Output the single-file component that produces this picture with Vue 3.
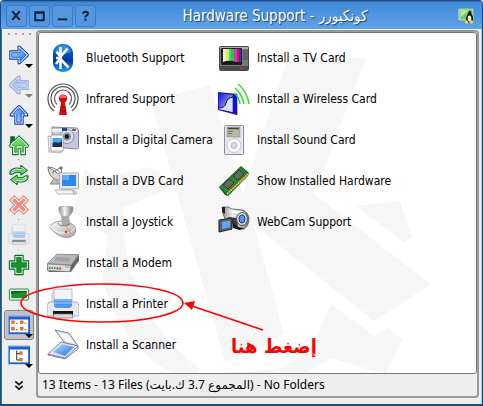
<template>
    <div class="window">
        <!-- icon definitions -->
        <svg class="defs" aria-hidden="true">
            <defs>
                <linearGradient id="gBlue" x1="0" y1="0" x2="1" y2="1">
                    <stop offset="0" stop-color="#b5e0ff" />
                    <stop offset="1" stop-color="#1c6fe8" />
                </linearGradient>
                <linearGradient id="gBt" x1="0" y1="0" x2="0" y2="1">
                    <stop offset="0" stop-color="#0a78dc" />
                    <stop offset="0.6" stop-color="#0634a4" />
                    <stop offset="1" stop-color="#1aa4f4" />
                </linearGradient>
                <linearGradient id="gGreen" x1="0" y1="0" x2="0" y2="1">
                    <stop offset="0" stop-color="#8cf070" />
                    <stop offset="1" stop-color="#2fae2f" />
                </linearGradient>
                <linearGradient id="gGrey" x1="0" y1="0" x2="1" y2="1">
                    <stop offset="0" stop-color="#ffffff" />
                    <stop offset="1" stop-color="#a2a2aa" />
                </linearGradient>
                <linearGradient id="gMetal" x1="0" y1="0" x2="1" y2="0">
                    <stop offset="0" stop-color="#8a8a8a" />
                    <stop offset="0.4" stop-color="#f4f4f4" />
                    <stop offset="1" stop-color="#777777" />
                </linearGradient>
                <linearGradient id="gWave" x1="0" y1="0" x2="1" y2="1">
                    <stop offset="0" stop-color="#1010e0" />
                    <stop offset="1" stop-color="#d8dcff" />
                </linearGradient>
            </defs>

            <!-- toolbar, 24x24 -->
            <symbol id="arrow" viewBox="0 0 24 24">
                <path d="M2 7.500h9V2.500h2l9 8.500v2L13 21.500h-2v-5H2z" fill="#fff" stroke="#123fc0" stroke-width="1.200" stroke-linejoin="round" />
                <path d="M4 9.500h9V5l7 7-7 7v-4.500H4z" fill="url(#gBlue)" stroke="#1450c8" stroke-width="0.900" />
            </symbol>
            <symbol id="home" viewBox="0 0 24 24">
                <path d="M3 3h4v4l5-5 10.500 10.500-1 2H19v8h-5v-7h-3v7H5v-8H2.500l-1-2L3 11z" fill="#fff" stroke="#0b7a2a" stroke-width="1.200" stroke-linejoin="round" />
                <path d="M3 3h4v4L3 11z" fill="#0a6a28" />
                <path d="M12 4.500l8 8h-3V20h-1.500v-7h-6v7H7v-7.500H4z" fill="url(#gGreen)" stroke="#22a028" stroke-width="0.600" />
            </symbol>
            <symbol id="reload" viewBox="0 0 24 24">
                <path d="M2 11c0-5 5-8 12-6V1.500l7 5.500-7 5V9.500c-5-1.500-7-.5-9 1.500z" fill="#fff" stroke="#0b6a28" stroke-width="1.200" stroke-linejoin="round" />
                <path d="M3.500 9.500C5 6 9 5.500 15 7V4.500L19 7l-4 3V8.500C9 7 6 7.500 3.500 9.500z" fill="#5edc50" stroke="#2fae2f" stroke-width="0.500" />
                <path d="M22 13c0 5-5 8-12 6v3.500L3 17l7-5v2.500c5 1.500 7 .5 9-1.500z" fill="#fff" stroke="#0b6a28" stroke-width="1.200" stroke-linejoin="round" />
                <path d="M20.500 14.500C19 18 15 18.500 9 17v2.500L5 17l4-3v1.500c6 1.500 9 1 11.500-1z" fill="#5edc50" stroke="#2fae2f" stroke-width="0.500" />
            </symbol>
            <symbol id="stop" viewBox="0 0 24 24">
                <path d="M7 2l5 5 5-5 5 5-5 5 5 5-5 5-5-5-5 5-5-5 5-5-5-5z" fill="#fff" stroke="#f07c7c" stroke-width="1.300" stroke-linejoin="round" />
                <path d="M7 5l5 5 5-5 2 2-5 5 5 5-2 2-5-5-5 5-2-2 5-5-5-5z" fill="#f08a84" stroke="#ee8a86" />
            </symbol>
            <symbol id="zoomin" viewBox="0 0 24 24">
                <path d="M7.500 1.500h9v6h6v9h-6v6h-9v-6h-6v-9h6z" fill="#fff" stroke="#0b6a28" stroke-width="1.200" stroke-linejoin="round" />
                <path d="M9.500 3.500h5v6h6v5h-6v6h-5v-6h-6v-5h6z" fill="#16962a" stroke="#0a7020" stroke-width="0.800" />
            </symbol>
            <symbol id="zoomout" viewBox="0 0 24 24">
                <rect x="1.500" y="5.500" width="21" height="12" rx="1" fill="#fff" stroke="#187a38" />
                <rect x="3.500" y="7.500" width="17" height="8" fill="#16962a" />
                <path d="M3.500 11q9-1 17-2.500v-1h-17z" fill="#0a6d1c" />
            </symbol>
            <symbol id="iconview" viewBox="0 0 24 24">
                <rect x="0" y="2" width="24" height="20" fill="#1c5fd0" />
                <path d="M.5 22V2.500h23" fill="none" stroke="#70b0f8" />
                <rect x="2" y="6" width="20" height="14" fill="#fff" />
                <g fill="#f07818" stroke="#b84808" stroke-width="0.500">
                    <rect x="4" y="7.500" width="3" height="3" /><rect x="13.500" y="7.500" width="3" height="3" />
                    <rect x="4" y="14.500" width="3" height="3" /><rect x="13.500" y="14.500" width="3" height="3" />
                </g>
                <path d="M8.500 10h2M18 10h2M8.500 17h2M18 17h2" stroke="#555" />
            </symbol>
            <symbol id="treeview" viewBox="0 0 24 24">
                <rect x="0" y="2" width="24" height="20" fill="#1c5fd0" />
                <path d="M.5 22V2.500h23" fill="none" stroke="#70b0f8" />
                <rect x="2" y="6" width="20" height="14" fill="#fff" />
                <path d="M9.500 7v10.500H13M9.500 10.500H13" fill="none" stroke="#222" />
                <rect x="12.500" y="8.500" width="3" height="3" fill="#f07818" stroke="#c05008" stroke-width="0.500" />
                <rect x="12.500" y="15.500" width="3" height="3" fill="#f07818" stroke="#c05008" stroke-width="0.500" />
            </symbol>
            <symbol id="more" viewBox="0 0 24 24">
                <path d="M8 8l4 3.500L16 8M8 13l4 3.500 4-3.500" fill="none" stroke="#111" stroke-width="1.800" />
            </symbol>

            <!-- devices, 32x32 -->
            <symbol id="bluetooth" viewBox="0 0 32 32">
                <rect x="6" y="2" width="20" height="28" rx="9" fill="url(#gBt)" />
                <path d="M8 10Q9 3 16 3t8 7q-8 4-16 0z" fill="#58b4f8" opacity="0.500" />
                <path d="M13.500 5v22M9.500 9.500l4 5.500M9 22l4.500-6M20.500 6.500l-8 9.500 9 9.500M9 16h4" fill="none" stroke="#fff" stroke-width="2.600" />
            </symbol>
            <symbol id="infrared" viewBox="0 0 32 32">
                <g fill="none" stroke="#555" stroke-width="1.200">
                    <path d="M7 28A15 15 0 1 1 25 28" />
                    <path d="M8 24.500A12 12 0 1 1 24 24.500" />
                    <path d="M10 21.500A8.500 8.500 0 1 1 22 21.500" />
                </g>
                <path d="M14.500 17h3L20 32h-8z" fill="#d01010" />
                <circle cx="16" cy="15.500" r="4" fill="#d80808" />
                <path d="M13 15a3 3 0 0 1 6 0z" fill="#ff7060" />
                <path d="M13.500 24h5M13 28h6" stroke="#900" />
            </symbol>
            <symbol id="camera" viewBox="0 0 32 32">
                <path d="M5 3l25 1q2 1 1.500 3v16q0 2-2 2l-24-2z" fill="#c6c6de" stroke="#8585a0" />
                <path d="M5 5h25v3H5z" fill="#eeeef8" />
                <circle cx="20" cy="12.500" r="7" fill="#dcdce8" stroke="#8c8ca4" />
                <circle cx="20" cy="12.500" r="4" fill="#8e92a8" />
                <circle cx="20" cy="12.500" r="2.200" fill="#16161e" />
                <path d="M15 4h5v3h-5z" fill="#26487c" />
                <rect x="25" y="5" width="4" height="2" fill="#666" />
                <path d="M1 12l14 3-1 14-12-1z" fill="#eee" stroke="#999" stroke-width="0.700" />
                <path d="M4 11h12v16H4z" fill="#fff" stroke="#888" stroke-width="0.700" />
                <path d="M5.500 14H15v9H5.500z" fill="#48a4ec" />
                <path d="M5.500 19l3-1 3 1 3.500-2v6H5.500z" fill="#173252" />
            </symbol>
            <symbol id="dvb" viewBox="0 0 32 32">
                <path d="M1 2q0 10 9 13 6 1 8-2z" fill="#d8d8d8" stroke="#777" />
                <path d="M1 2q9 0 17 11M5 8l9-6 1 10" fill="none" stroke="#777" />
                <circle cx="14" cy="3" r="1.500" fill="#666" />
                <path d="M7 14l-4 5h9l-2-4" fill="#bbb" stroke="#888" />
                <rect x="12.500" y="8" width="19" height="16" rx="1" fill="#e8eaf0" stroke="#a6aab8" />
                <rect x="15" y="10" width="14" height="11" fill="#2f86ee" />
                <path d="M15 10h7v5h-7z" fill="#82c2ff" opacity="0.600" />
                <path d="M19 24h7l2 3H17z" fill="#c4c4cc" />
                <path d="M8 25h17l3 4H11z" fill="#f5f5f8" stroke="#999" stroke-width="0.700" />
                <ellipse cx="28" cy="28" rx="2" ry="1.500" fill="#ddd" stroke="#999" stroke-width="0.600" />
            </symbol>
            <symbol id="joystick" viewBox="0 0 32 32">
                <path d="M3 21q2-5 11-6 11 1 14 6 2 4-1 8-5 4-11 2-9-3-13-10z" fill="url(#gGrey)" stroke="#999" />
                <path d="M3 20q6 8 16 7 6-1 9-5" fill="none" stroke="#fff" />
                <path d="M14 8h8l1 11q-5 3-8 0z" fill="#aaa" />
                <path d="M12 1q6-2 14 0 1 5-4 9-5 2-8-1-3-4-2-8z" fill="url(#gMetal)" stroke="#999" stroke-width="0.600" />
                <path d="M11 17q2 5 12 1" fill="none" stroke="#888" />
                <circle cx="19" cy="26" r="1.300" fill="#e83c18" /><circle cx="22.500" cy="25" r="1.300" fill="#f49a10" />
                <circle cx="20" cy="22.500" r="1" fill="#f4b030" />
            </symbol>
            <symbol id="modem" viewBox="0 0 32 32">
                <path d="M0 17L10 7l22 0.500v6L24 25H2l-2-2z" fill="#666" />
                <path d="M.5 16.500L10 7l21.500 1-7.500 10z" fill="#b9b9bd" stroke="#888" stroke-width="0.600" />
                <path d="M9 10l15 1-2 4-14-1z" fill="#a2a2a6" />
                <path d="M.5 17l23 1.500-.5 6L1 23.500z" fill="#dcdcdc" stroke="#888" stroke-width="0.600" />
                <path d="M2 21h8" stroke="#28a058" stroke-width="2" stroke-dasharray="1.500 1" />
                <path d="M10 21.500h5" stroke="#c02838" stroke-width="2" stroke-dasharray="1.500 1" />
                <path d="M18 20h4" stroke="#dd7777" />
            </symbol>
            <symbol id="printer" viewBox="0 0 32 32">
                <path d="M5 15V5l3-1v10z" fill="#e4e4ea" stroke="#aaa" stroke-width="0.600" />
                <path d="M7 1h18v15H7z" fill="#f4f4f8" stroke="#b0b0b8" stroke-width="0.800" />
                <path d="M2 14h28l2 3v10q0 1-1 1H1q-1 0-1-1V17z" fill="#e9e9ef" stroke="#9d9da8" stroke-width="0.800" />
                <path d="M7 11h18v7q-1 2-3 2H10q-3 0-3-3z" fill="#4f98ea" />
                <path d="M7 12h18M7 15h18" stroke="#9ed0ff" />
                <path d="M6 23h20v4H6z" fill="#111" />
                <path d="M7 26h18l1 4H6z" fill="#d9d9e0" stroke="#777" stroke-width="0.700" />
            </symbol>
            <symbol id="scanner" viewBox="0 0 32 32">
                <path d="M8 1l14 3 9 13-13-3z" fill="#dedee8" stroke="#84849a" />
                <path d="M10 3l11 3 7 9-10-3z" fill="#f6f6fb" />
                <path d="M1 25l13-12 17 4v3L18 30l-17-4z" fill="#e6e6f0" stroke="#84849a" />
                <path d="M6 23l9-8 12 3-9 9z" fill="url(#gBlue)" />
                <path d="M1 25l17 4 13-12" fill="none" stroke="#70708a" stroke-width="0.800" />
            </symbol>
            <symbol id="tv" viewBox="0 0 32 32">
                <rect x="1.500" y="4.500" width="29" height="24" rx="1" fill="#777" stroke="#4a4a4a" />
                <path d="M2 5h28v2H2z" fill="#b0b0b0" />
                <rect x="3" y="6" width="21" height="17" rx="1" fill="#222" />
                <rect x="5" y="7" width="3" height="13" fill="#e8e8f4" /><rect x="8" y="7" width="3" height="13" fill="#f4ec18" />
                <rect x="11" y="7" width="2" height="13" fill="#18d8e8" /><rect x="13" y="7" width="3" height="13" fill="#24cc28" />
                <rect x="16" y="7" width="3" height="13" fill="#ec28d4" /><rect x="19" y="7" width="2" height="13" fill="#e81818" />
                <rect x="21" y="7" width="2" height="13" fill="#2038dc" />
                <path d="M5 20q5-2 9-1l4 1 4 2H6z" fill="#111" />
                <path d="M25 9h5M25 11h5M25 13h5M25 15h5M25 17h5" stroke="#505050" />
                <path d="M2 24h28v4H2z" fill="#4c4c4c" />
                <path d="M22 26h3" stroke="#d03030" stroke-width="1.500" />
            </symbol>
            <symbol id="wireless" viewBox="0 0 32 32">
                <path d="M0 9l19 2v21L0 27z" fill="#1414b0" />
                <path d="M1 10l14 2v17L1 26z" fill="url(#gWave)" />
                <path d="M1 25q6 0 7-5t7-6v15L1 26z" fill="#dfe2ff" />
                <path d="M1 25q6 0 7-5t7-6" fill="none" stroke="#111" />
                <path d="M15 12l4-1v21l-4-3z" fill="#1010e8" stroke="#080880" stroke-width="0.600" />
                <path d="M20 1q9 7 11 20M17 5q7 6 9 16M16 10q5 4 6 11" fill="none" stroke="#20e020" stroke-width="1.500" />
            </symbol>
            <symbol id="sound" viewBox="0 0 32 32">
                <rect x="6.500" y="1.500" width="19" height="29" rx="1" fill="#e8e8f2" stroke="#8e8ea0" />
                <rect x="9" y="3" width="13" height="10" fill="#b8b89c" stroke="#777" stroke-width="0.500" />
                <path d="M10 4.500h11" stroke="#444" stroke-width="1.500" />
                <path d="M10 7.500h5M10 9.500h4" stroke="#666" stroke-width="0.800" />
                <circle cx="16" cy="21.500" r="7" fill="#fafaff" stroke="#c4c4d0" />
                <circle cx="16" cy="21.500" r="3" fill="#dcdce8" stroke="#b4b4c4" />
            </symbol>
            <symbol id="ram" viewBox="0 0 32 32">
                <path d="M1 22L23 1l8 7-1 3L10 31l-3-1z" fill="#0c5a20" />
                <path d="M2 22L23 2l6 6L8 28z" fill="#238838" />
                <path d="M9 29L30 9" stroke="#f0cc30" stroke-width="2" stroke-dasharray="2 0.500" />
                <path d="M5 20l6-6 5 4-6 6z" fill="#666" stroke="#222" stroke-width="0.700" />
                <path d="M15 11l6-6 5 4-6 6z" fill="#666" stroke="#222" stroke-width="0.700" />
            </symbol>
            <symbol id="webcam" viewBox="0 0 32 32">
                <path d="M4 1h6l4 2 11 1q5 2 6 8 0 8-5 11h-6L9 17 5 8z" fill="url(#gMetal)" stroke="#444" stroke-width="0.700" />
                <path d="M4 1h3v7L4 6z" fill="#222" />
                <path d="M8 5q7 0 10 3l10-1-5-2H11z" fill="#fff" />
                <path d="M10 11l9 1 1 10-8-5z" fill="#3a3a3a" />
                <ellipse cx="24" cy="13" rx="5.500" ry="6.500" fill="#d4d4d4" stroke="#555" />
                <ellipse cx="24" cy="13" rx="3" ry="4" fill="#5a98e4" stroke="#184078" />
                <path d="M15 17q4 5 11 5l-4 2-7-2z" fill="#111" />
                <path d="M1 14l13-2v11L1 26z" fill="#5c5c66" stroke="#222" />
                <path d="M4 16l8-1.500v7L4 23z" fill="#5aa8f0" />
            </symbol>
        </svg>

        <header class="titlebar">
            <div class="controls">
                <button v-for="c in controls" :key="c.label" class="control" :aria-label="c.label">
                    <svg viewBox="0 0 20 20" width="20" height="20"><path :d="c.d" /></svg>
                </button>
            </div>
            <h1 class="title">Hardware Support - كونكيورر</h1>
            <svg class="app-icon" viewBox="0 0 16 16" width="16" height="16">
                <path d="M1 1v11" stroke="#ddd" />
                <path d="M2 1h13v11H2z" fill="#78c860" stroke="#d0f0c0" stroke-width="0.700" />
                <path d="M3 2h8L3 9z" fill="#b2e89c" />
                <path d="M11 3q2-1 2.500 2.500 2 3 1.500 7l-4 2-3-2q0-4 2-7z" fill="#111" />
                <ellipse cx="11.500" cy="10.500" rx="1.800" ry="3" fill="#fff" />
                <circle cx="8.500" cy="14" r="1.700" fill="#fad42a" /><circle cx="13.500" cy="14" r="1.700" fill="#fad42a" />
            </svg>
        </header>

        <div class="body">
            <nav class="toolbar">
                <div class="grip"><i v-for="n in 4" :key="n"></i></div>
                <button
                    v-for="t in tools"
                    :key="t.label"
                    class="tool"
                    :class="[t.turn, { active: t.active, disabled: t.disabled, last: t.last }]"
                    :aria-label="t.label"
                >
                    <svg width="22" height="22"><use :href="'#' + t.icon" /></svg>
                    <span v-if="t.menu" class="caret"></span>
                </button>
            </nav>

            <main class="frame">
                <section class="view">
                    <svg class="watermark" width="440" height="342" viewBox="38 32 440 342" aria-hidden="true">
                        <defs>
                            <pattern id="dots" width="4" height="4" patternUnits="userSpaceOnUse">
                                <rect width="4" height="4" fill="#f5f5f5" />
                                <rect width="1" height="1" fill="#fff" />
                                <rect x="2" y="2" width="1" height="1" fill="#fff" />
                            </pattern>
                        </defs>
                        <g fill="url(#dots)">
                            <path d="M150 100L209 84L242 193L287 57H365L313 193L430 283L373 320L253 224L283 333L224 361z" />
                            <path d="M355 205L399 200L411 237L402 241z" />
                            <path d="M330 303L373 335L387 327L401 338L385 372H379L330 357L303 372H223Q262 370 280 367Q305 352 313 343z" />
                            <path d="M84 168L98 178L146 166L157 169L167 188L122 206Q122 250 134 282Q152 334 199 367L196 372H172Q120 347 101 278L107 235L72 211z" />
                        </g>
                    </svg>
                    <div class="items">
                        <a v-for="i in items" :key="i.name" href="#" class="item">
                            <svg width="32" height="32"><use :href="'#' + i.icon" /></svg>
                            <span>{{ i.name }}</span>
                        </a>
                    </div>
                </section>
                <footer class="status">13 Items - 13 Files (المجموع 3.7 ك.بايت) - No Folders</footer>
            </main>
        </div>

        <!-- hint drawn over the window -->
        <svg class="hint" width="300" height="100" viewBox="0 270 300 100" aria-hidden="true">
            <ellipse cx="101" cy="303" rx="81" ry="19" fill="none" stroke="#f00" stroke-width="1.600" />
            <path d="M262 330L191 306" stroke="#f00" stroke-width="1.800" />
            <path d="M183 303l11-2-3 9z" fill="#f00" />
        </svg>
        <span class="hint-text" lang="ar" dir="rtl">إضغط هنا</span>
    </div>
</template>

<script setup>
const controls = [
    { label: 'Close', d: 'M5.500 5l8 9M13.500 5l-8 9' },
    { label: 'Maximize', d: 'M5.500 6v8.500h9V6zM5 6.500h10' },
    { label: 'Minimize', d: 'M5 13.500h10' },
    { label: 'Help', d: 'M7.500 7.500q0-2 2.500-2t2.500 2q0 1.500-1.500 2.200t-1 2M10 13v2' },
]

const tools = [
    { label: 'Back', icon: 'arrow', menu: true },
    { label: 'Forward', icon: 'arrow', menu: true, turn: 'left', disabled: true },
    { label: 'Up', icon: 'arrow', menu: true, turn: 'up' },
    { label: 'Home', icon: 'home', last: true },
    { label: 'Reload', icon: 'reload' },
    { label: 'Stop', icon: 'stop', last: true },
    { label: 'Print', icon: 'printer', disabled: true, last: true },
    { label: 'Zoom in', icon: 'zoomin' },
    { label: 'Zoom out', icon: 'zoomout', last: true },
    { label: 'Icon view', icon: 'iconview', menu: true, active: true },
    { label: 'Tree view', icon: 'treeview', menu: true },
    { label: 'More', icon: 'more' },
]

const items = [
    { name: 'Bluetooth Support', icon: 'bluetooth' },
    { name: 'Infrared Support', icon: 'infrared' },
    { name: 'Install a Digital Camera', icon: 'camera' },
    { name: 'Install a DVB Card', icon: 'dvb' },
    { name: 'Install a Joystick', icon: 'joystick' },
    { name: 'Install a Modem', icon: 'modem' },
    { name: 'Install a Printer', icon: 'printer' },
    { name: 'Install a Scanner', icon: 'scanner' },
    { name: 'Install a TV Card', icon: 'tv' },
    { name: 'Install a Wireless Card', icon: 'wireless' },
    { name: 'Install Sound Card', icon: 'sound' },
    { name: 'Show Installed Hardware', icon: 'ram' },
    { name: 'WebCam Support', icon: 'webcam' },
]
</script>

<style>
body {
    background: #eeeeee;
}
</style>

<style scoped>
.window {
    position: relative;
    box-sizing: border-box;
    min-height: 100vh;
    display: flex;
    flex-direction: column;
    border: 1px solid #1d4a7c;
    border-bottom-width: 2px;
    border-radius: 4px 4px 0 0;
    background: #eeeeee;
    font-family: "DejaVu Sans Condensed", "DejaVu Sans", sans-serif;
    font-size: 12px;
    color: #000;
}

.defs {
    position: absolute;
    width: 0;
    height: 0;
}

button {
    padding: 0;
    border: 0;
    background: none;
}

/* title bar */
.titlebar {
    display: flex;
    align-items: center;
    height: 28px;
    padding: 0 8px 0 5px;
    border-top: 1px solid #2f6cb4;
    box-sizing: border-box;
    background: linear-gradient(#3f89d8, #5fa2e8);
}

.controls {
    display: flex;
    gap: 2px;
}

.control {
    display: flex;
    box-sizing: border-box;
    width: 21px;
    height: 22px;
    border: 1px solid #3c7cc4;
    border-radius: 3px;
    background: #5496e0;
}

.control path {
    fill: none;
    stroke: #0e2038;
    stroke-width: 2;
}

.title {
    flex: 1;
    margin: 0;
    padding-right: 4px;
    text-align: center;
    font-size: 15px;
    line-height: 20px;
    font-weight: normal;
    color: #fff;
    text-shadow: 1px 1px 1px #1c4470;
}

.body {
    flex: 1;
    display: flex;
    border-left: 1px solid #3a6ea8;
    border-right: 1px solid #b8c8dc;
}

/* toolbar */
.toolbar {
    display: flex;
    flex-direction: column;
    align-items: center;
    width: 34px;
    padding-top: 4px;
}

.grip {
    display: flex;
    gap: 5px;
    height: 7px;
}

.grip i {
    width: 2px;
    height: 2px;
    background: #a8a8a8;
}

.tool {
    position: relative;
    display: flex;
    align-items: center;
    justify-content: center;
    box-sizing: border-box;
    width: 30px;
    height: 30px;
    border: 1px solid transparent;
    border-radius: 3px;
}

.tool.active {
    border-color: #868686;
    background: #c2c2c6;
}

.tool.left svg {
    transform: rotate(180deg);
}

.tool.up svg {
    transform: rotate(-90deg);
}

.tool.disabled {
    opacity: 0.45;
}

/* group separator */
.tool.last::after {
    content: "";
    position: absolute;
    left: 13px;
    bottom: -1px;
    width: 1px;
    height: 1px;
    background: #999;
}

.caret {
    position: absolute;
    right: 0;
    bottom: 1px;
    border: 4px solid transparent;
    border-top-color: #000;
    border-bottom: 0;
}

/* file view */
.frame {
    flex: 1;
    display: flex;
    flex-direction: column;
    margin: 1px 2px 6px 0;
    border: 2px solid #999;
    border-radius: 4px;
}

.view {
    position: relative;
    flex: 1;
    overflow: hidden;
    border: 1px solid #777;
    border-radius: 3px;
    background: #fff;
}

.watermark {
    position: absolute;
    top: 0;
    left: 0;
}

.items {
    position: relative;
    display: grid;
    grid-template-rows: repeat(8, 41px);
    grid-auto-flow: column;
    grid-auto-columns: 171px;
    padding: 4px 8px;
}

.item {
    display: flex;
    align-items: center;
    gap: 7px;
    color: #000;
    text-decoration: none;
    white-space: nowrap;
}

.item svg {
    flex: none;
}

.status {
    padding: 0 4px;
    font-family: "Noto Sans", "DejaVu Sans", sans-serif;
    line-height: 22px;
    white-space: nowrap;
}

/* hint */
.hint {
    position: absolute;
    top: 269px;
    left: 0;
    pointer-events: none;
}

.hint-text {
    position: absolute;
    top: 330px;
    left: 230px;
    font-size: 20px;
    line-height: 30px;
    font-weight: bold;
    color: #f00;
    white-space: nowrap;
}
</style>
